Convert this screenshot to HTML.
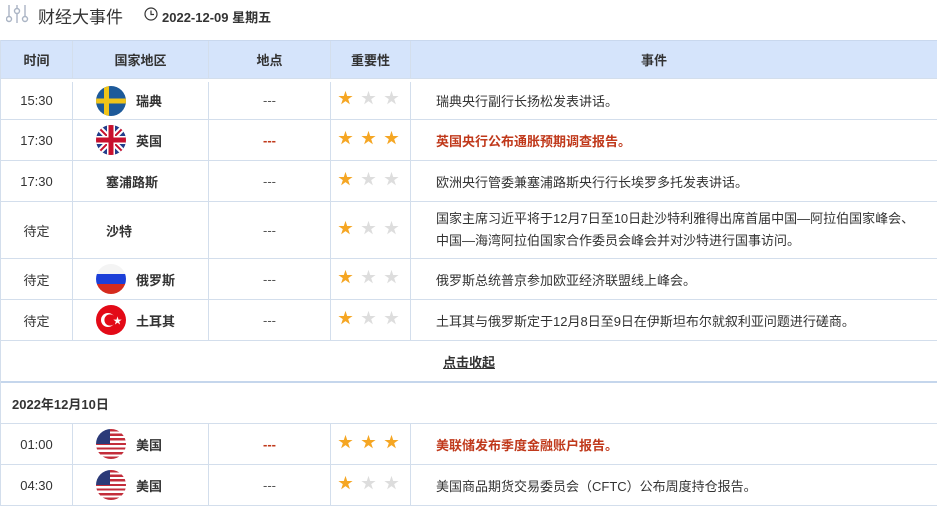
<!DOCTYPE html>
<html><head><meta charset="utf-8"><style>
*{margin:0;padding:0;box-sizing:border-box}
body{width:937px;height:505px;overflow:hidden;background:#fff;font-family:"Liberation Sans","Noto Sans CJK SC",sans-serif;font-size:13px;color:#333;position:relative}
.top{position:absolute;left:0;top:0;height:30px;width:937px}
.tbl{position:absolute;left:0;top:40px;width:937px;border-left:1px solid #d3deec}
.r{display:flex;border-bottom:1px solid #d3deec;align-items:center}
.c{border-right:1px solid #d3deec;height:100%;display:flex;align-items:center;justify-content:center}
.c1{width:72px}.c2{width:136px;justify-content:flex-start}.c3{width:122px}.c4{width:80px}.c5{flex:1;justify-content:flex-start;padding-left:25px;border-right:none}
.hd{background:#d5e4fb;height:39px;font-weight:bold;color:#333;border-top:1px solid #c9d8ee}
.hd .c5{justify-content:center;padding:0 40px 0 0}
.flag{width:30px;height:30px;border-radius:50%;overflow:hidden;margin-left:23px;margin-right:10px;flex:none}
.nf{margin-left:33px}
.cn{font-weight:bold}
.red{color:#c0391b;font-weight:bold}
.st{display:flex;gap:8px;margin-left:-4px;font-size:15px;transform:translateY(-3px)}
.dash{color:#555}
.us{background:linear-gradient(#2b3a78,#2b3a78) 0 0/14px 15px no-repeat,repeating-linear-gradient(#c32d3a 0 2.3px,#fff 2.3px 4.6px)}
</style></head><body>
<div class="top">
<svg style="position:absolute;left:6px;top:4px" width="24" height="20" viewBox="0 0 24 20" fill="none" stroke="#aab4c4" stroke-width="1.4"><line x1="3" y1="1" x2="3" y2="12"/><circle cx="3" cy="15" r="2.5"/><line x1="11" y1="1" x2="11" y2="4"/><circle cx="11" cy="7" r="2.5"/><line x1="11" y1="10" x2="11" y2="19"/><line x1="19" y1="1" x2="19" y2="12"/><circle cx="19" cy="15" r="2.5"/></svg>
<span style="position:absolute;left:38px;top:3px;font-size:17px;color:#333">财经大事件</span>
<svg style="position:absolute;left:144px;top:7px" width="14" height="14" viewBox="0 0 14 14" fill="none" stroke="#333" stroke-width="1.2"><circle cx="7" cy="7" r="6"/><path d="M7 3.5V7.5H10"/></svg>
<span style="position:absolute;left:162px;top:7px;font-size:13px;font-weight:bold;color:#333">2022-12-09 星期五</span>
</div>
<div class="tbl">
<div class="r hd"><div class="c c1">时间</div><div class="c c2" style="justify-content:center">国家地区</div><div class="c c3">地点</div><div class="c c4">重要性</div><div class="c c5">事件</div></div>

<div class="r" style="height:41px;border-top:3px solid #fff"><div class="c c1">15:30</div><div class="c c2"><div class="flag"><svg width="30" height="30"><rect width="30" height="30" fill="#1d5a9a"/><rect x="8" width="5" height="30" fill="#f0c419"/><rect y="12.5" width="30" height="5" fill="#f0c419"/></svg></div><span class="cn">瑞典</span></div><div class="c c3 dash">---</div><div class="c c4"><div class="st" data-n="1"></div></div><div class="c c5">瑞典央行副行长扬松发表讲话。</div></div>
<div class="r" style="height:41px"><div class="c c1">17:30</div><div class="c c2"><div class="flag"><svg width="30" height="30"><rect width="30" height="30" fill="#233e8b"/><path d="M0 0L30 30M30 0L0 30" stroke="#fff" stroke-width="6"/><path d="M0 0L30 30M30 0L0 30" stroke="#c8102e" stroke-width="2"/><path d="M15 0V30M0 15H30" stroke="#fff" stroke-width="8"/><path d="M15 0V30M0 15H30" stroke="#c8102e" stroke-width="5"/></svg></div><span class="cn">英国</span></div><div class="c c3 red">---</div><div class="c c4"><div class="st" data-n="3"></div></div><div class="c c5 red">英国央行公布通胀预期调查报告。</div></div>
<div class="r" style="height:41px"><div class="c c1">17:30</div><div class="c c2"><span class="cn nf">塞浦路斯</span></div><div class="c c3 dash">---</div><div class="c c4"><div class="st" data-n="1"></div></div><div class="c c5">欧洲央行管委兼塞浦路斯央行行长埃罗多托发表讲话。</div></div>
<div class="r" style="height:57px"><div class="c c1">待定</div><div class="c c2"><span class="cn nf">沙特</span></div><div class="c c3 dash">---</div><div class="c c4"><div class="st" data-n="1"></div></div><div class="c c5" style="line-height:22px;padding-right:10px">国家主席习近平将于12月7日至10日赴沙特利雅得出席首届中国—阿拉伯国家峰会、中国—海湾阿拉伯国家合作委员会峰会并对沙特进行国事访问。</div></div>
<div class="r" style="height:41px"><div class="c c1">待定</div><div class="c c2"><div class="flag"><svg width="30" height="30"><rect width="30" height="10" fill="#f4f4f4"/><rect y="10" width="30" height="10" fill="#1c3fd8"/><rect y="20" width="30" height="10" fill="#d52b1e"/></svg></div><span class="cn">俄罗斯</span></div><div class="c c3 dash">---</div><div class="c c4"><div class="st" data-n="1"></div></div><div class="c c5">俄罗斯总统普京参加欧亚经济联盟线上峰会。</div></div>
<div class="r" style="height:41px"><div class="c c1">待定</div><div class="c c2"><div class="flag"><svg width="30" height="30"><rect width="30" height="30" fill="#e30a17"/><circle cx="12" cy="15" r="7" fill="#fff"/><circle cx="14" cy="15" r="5.6" fill="#e30a17"/><text x="17" y="19" font-size="9" fill="#fff">★</text></svg></div><span class="cn">土耳其</span></div><div class="c c3 dash">---</div><div class="c c4"><div class="st" data-n="1"></div></div><div class="c c5">土耳其与俄罗斯定于12月8日至9日在伊斯坦布尔就叙利亚问题进行磋商。</div></div>
<div class="r" style="height:42px;border-bottom:2px solid #c5d6ec;justify-content:center"><span style="font-weight:bold;text-decoration:underline;color:#333">点击收起</span></div>
<div class="r" style="height:41px;padding-left:11px;font-weight:bold">2022年12月10日</div>
<div class="r" style="height:41px"><div class="c c1">01:00</div><div class="c c2"><div class="flag us"></div><span class="cn">美国</span></div><div class="c c3 red">---</div><div class="c c4"><div class="st" data-n="3"></div></div><div class="c c5 red">美联储发布季度金融账户报告。</div></div>
<div class="r" style="height:41px"><div class="c c1">04:30</div><div class="c c2"><div class="flag us"></div><span class="cn">美国</span></div><div class="c c3 dash">---</div><div class="c c4"><div class="st" data-n="1"></div></div><div class="c c5">美国商品期货交易委员会（CFTC）公布周度持仓报告。</div></div>
</div>
<script>
document.querySelectorAll('.st').forEach(function(s){var n=+s.getAttribute('data-n');for(var k=0;k<3;k++){var e=document.createElement('span');e.textContent='★';e.style.color=k<n?'#f5a623':'#ddd';s.appendChild(e);}});
</script>
</body></html>
